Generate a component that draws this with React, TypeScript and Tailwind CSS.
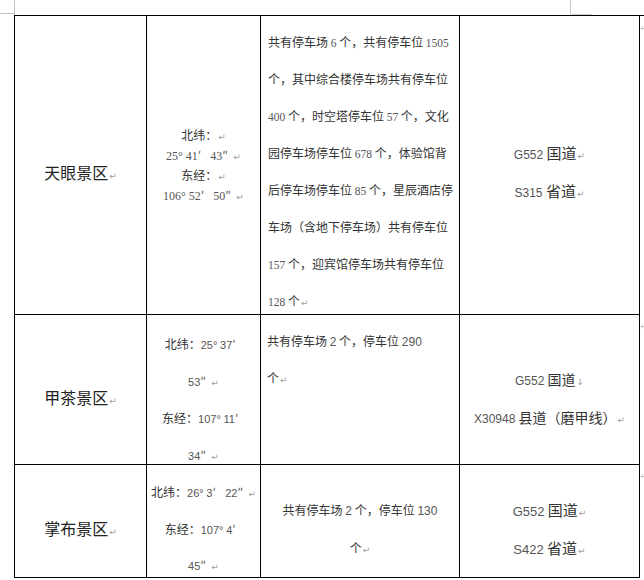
import React from "react";

const MARK = "font-['DejaVu_Sans',sans-serif] text-[9px] leading-none text-[#a0a0a0] ml-[1px]";
const PRIME = "inline-block w-[10px] text-left leading-none text-[#555]";

function Run({ text, num }: { text: string; num?: string }) {
  const parts = text.split(/([0-9A-Za-z°]+|↵|↓|′|″)/);
  return (
    <>
      {parts.map((p, i) => {
        if (!p) return null;
        if (p === "↵" || p === "↓")
          return (
            <span key={i} className={MARK}>
              {p}
            </span>
          );
        if (p === "′" || p === "″")
          return (
            <span key={i} className={PRIME}>
              {p}
            </span>
          );
        if (/^[0-9A-Za-z°]+$/.test(p))
          return (
            <span key={i} className={num}>
              {p}
            </span>
          );
        return (
          <span key={i} className="leading-none">
            {p}
          </span>
        );
      })}
    </>
  );
}

function Lines({ lines, num }: { lines: string[]; num?: string }) {
  return (
    <>
      {lines.map((l, i) => (
        <div key={i} className="whitespace-nowrap">
          <Run text={l} num={num} />
        </div>
      ))}
    </>
  );
}

const serif12 = "font-['Liberation_Serif',serif] text-[12px] leading-none text-[#555]";
const serif11 = "font-['Liberation_Serif',serif] text-[11.5px] leading-none text-[#555]";
const sans11 = "font-['Liberation_Sans',sans-serif] text-[11px] leading-none text-[#555]";
const sans12 = "font-['Liberation_Sans',sans-serif] text-[12px] leading-none text-[#555]";
const sans13 = "font-['Liberation_Sans',sans-serif] text-[13px] leading-none text-[#555]";

const cell = "border-r border-b border-black";

export default function App() {
  return (
    <div className="relative w-[644px] h-[580px] bg-white overflow-hidden font-['Noto_Sans_CJK_SC',sans-serif] text-[#333]">
      {/* crop marks */}
      <div className="absolute left-[14px] top-0 w-px h-[15px] bg-[#c4c4c4]" />
      <div className="absolute left-0 top-[13px] w-[14px] h-px bg-[#c4c4c4]" />
      <div className="absolute left-[570px] top-0 w-px h-[14px] bg-[#c8c8c8]" />
      <div className="absolute left-[570px] top-[14px] w-[22px] h-px bg-[#d0d0d0]" />
      <span className="absolute left-[640px] top-[22px] text-[8px] text-[#aaa]">+</span>
      <span className="absolute left-[640px] top-[320px] text-[8px] text-[#aaa]">+</span>
      <span className="absolute left-[640px] top-[470px] text-[8px] text-[#aaa]">+</span>

      <div className="ml-[14px] mt-[15px] grid grid-cols-[132px_114px_199px_180px] grid-rows-[299px_150px_113px] border-l border-t border-black">
        {/* Row 1 */}
        <div className={`${cell} pt-[144px] text-center text-[16px] leading-[24px] text-[#222]`}>
          <Run text="天眼景区↵" />
        </div>
        <div className={`${cell} pt-[109px] text-center text-[12px] leading-[20px]`}>
          <Lines lines={["北纬：↵", "25° 41′ 43″↵", "东经：↵", "106° 52′ 50″↵"]} num={serif12} />
        </div>
        <div className={`${cell} pt-[7px] pl-[7px] text-[12px] leading-[37px]`}>
          <Lines
            num={serif11}
            lines={[
              "共有停车场 6 个，共有停车位 1505",
              "个，其中综合楼停车场共有停车位",
              "400 个，时空塔停车位 57 个，文化",
              "园停车场停车位 678 个，体验馆背",
              "后停车场停车位 85 个，星辰酒店停",
              "车场（含地下停车场）共有停车位",
              "157 个，迎宾馆停车场共有停车位",
              "128 个↵",
            ]}
          />
        </div>
        <div className={`${cell} pt-[118px] text-center text-[15px] leading-[38px]`}>
          <Lines lines={["G552 国道↵", "S315 省道↵"]} num={sans12} />
        </div>

        {/* Row 2 */}
        <div className={`${cell} pt-[70px] text-center text-[16px] leading-[24px] text-[#222]`}>
          <Run text="甲茶景区↵" />
        </div>
        <div className={`${cell} pt-[10px] text-center text-[12px] leading-[37px]`}>
          <Lines lines={["北纬：25° 37′", "53″↵", "东经：107° 11′", "34″↵"]} num={sans11} />
        </div>
        <div className={`${cell} pt-[7px] pl-[6px] text-[12px] leading-[37px]`}>
          <Lines lines={["共有停车场 2 个，停车位 290", "个↵"]} num={sans12} />
        </div>
        <div className={`${cell} pt-[45px] text-center text-[14px] leading-[38px]`}>
          <Lines lines={["G552 国道↓", "X30948 县道（磨甲线）↵"]} num={sans12} />
        </div>

        {/* Row 3 */}
        <div className={`${cell} pt-[51px] text-center text-[16px] leading-[24px] text-[#222]`}>
          <Run text="掌布景区↵" />
        </div>
        <div className={`${cell} pt-[9px] text-center text-[12px] leading-[36.5px]`}>
          <Lines lines={["北纬：26° 3′ 22″↵", "东经：107° 4′", "45″↵"]} num={sans11} />
        </div>
        <div className={`${cell} pt-[26px] text-center text-[12px] leading-[38px]`}>
          <Lines lines={["共有停车场 2 个，停车位 130", "个↵"]} num={sans12} />
        </div>
        <div className={`${cell} pt-[26px] text-center text-[15px] leading-[38px]`}>
          <Lines lines={["G552 国道↵", "S422 省道↵"]} num={sans13} />
        </div>
      </div>
    </div>
  );
}
